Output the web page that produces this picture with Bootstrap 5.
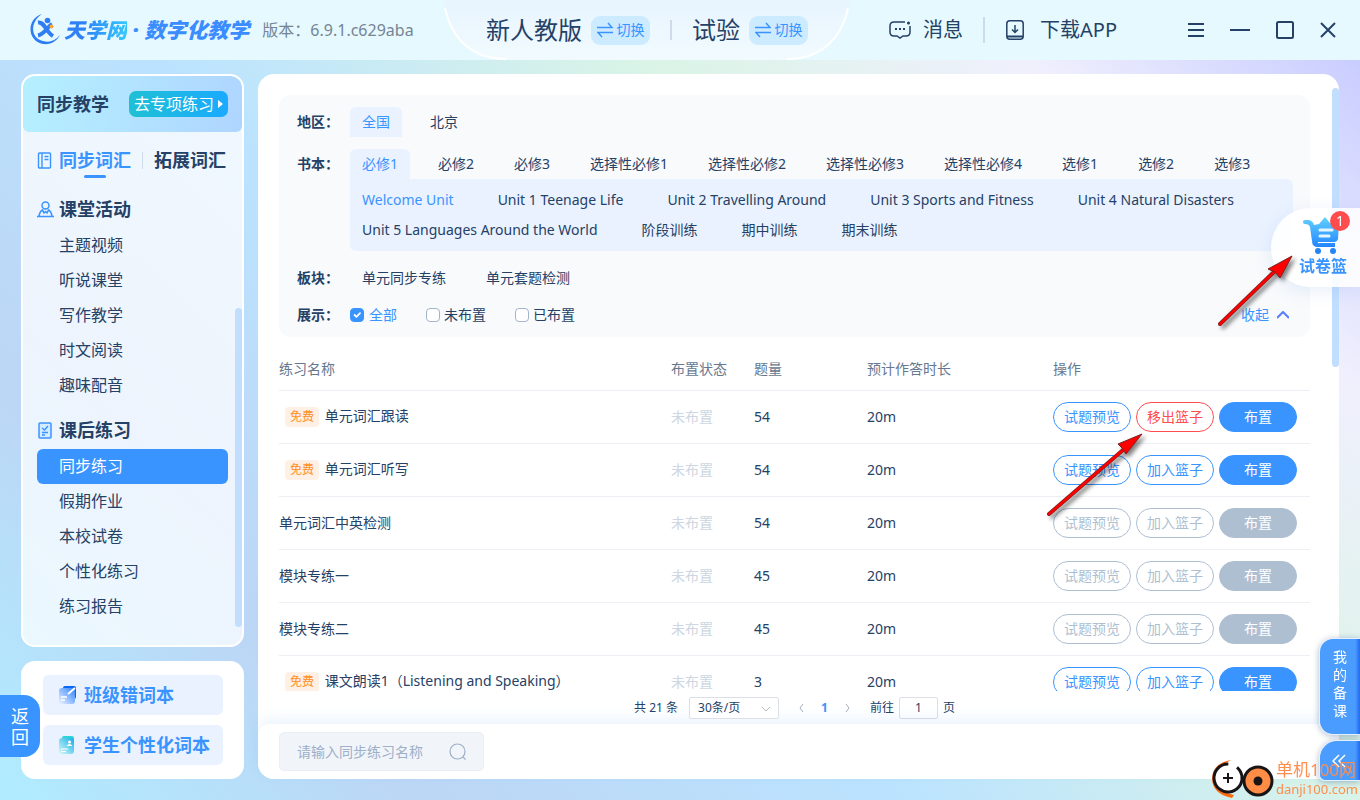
<!DOCTYPE html>
<html lang="zh-CN">
<head>
<meta charset="utf-8">
<meta name="viewport" content="width=device-width, initial-scale=1">
<title>天学网 · 数字化教学</title>
<link rel="stylesheet" href="https://cdn.jsdelivr.net/npm/bootstrap@5.3.0/dist/css/bootstrap.min.css">
<style>
:root{--ink:#254166;--blue:#3a94ff;--grey:#afbfd2}
body{font-family:"Noto Sans","Noto Sans CJK SC",sans-serif;font-size:14px;line-height:20px;color:var(--ink);height:100vh;overflow:hidden;background:#e5f9ff}
a{color:inherit;text-decoration:none}
button{color:inherit}
svg{flex:none;display:block}
/* top bar */
.topbar{height:60px;background:#e5f9ff}
.brand-side{width:444px;padding-left:30px}
.wordmark{font-size:21px;line-height:30px;font-weight:900;font-style:italic;color:#3b8cff;margin-left:2px}
.wordmark b{font-weight:900;background:linear-gradient(90deg,#2f80f5 30%,#35c8ff);-webkit-background-clip:text;background-clip:text;color:transparent}
.version{font-size:16px;color:#768493;margin-left:13px}
.edition{width:406px;font-size:24px;position:relative}
.edition>*{z-index:1}
.edition>svg{position:absolute;inset:0;z-index:0}
.swap{height:29px;width:59px;border:0;border-radius:9px;background:#cdebff;color:var(--blue);font-size:14px;padding:0;margin-left:9px}
.rule{width:2px;background:#cfdbeb}
.tool{font-size:20px}
.plain{border:0;background:none;padding:0}
.workspace{min-height:0;gap:14px;padding:14px 21px 21px;background:linear-gradient(45deg,#b0ecff 0%,#bcd6f5 20%,#bbe3ff 43%,#daf4e6 66%,#f0f0fd 84%,#c9cdff 100%)}
/* left column */
.side{width:223px}
.menu-panel{border:2px solid #fff;border-radius:14px;background:linear-gradient(45deg,#ebf8ff,#edf4fd 40%,#f0f8ff)}
.menu-head{height:56px;border-radius:10px 10px 6px 6px;background:linear-gradient(100deg,#b5f0ff,#afd5ff);padding:0 14px}
.ttl{font-size:18px;font-weight:700}
.go{width:99px;height:26px;border:0;border-radius:7px;background:linear-gradient(90deg,#1fc0d4,#1aaaff);color:#fff;font-size:16px;line-height:26px;padding:0;white-space:nowrap}
.tabs{height:58px;padding:0 14px 2px}
.tabs a.on{color:var(--blue);position:relative}
.tabs a.on::after{content:"";position:absolute;left:50%;margin-left:-11px;bottom:-8px;width:22px;height:3px;border-radius:2px;background:var(--blue)}
.group-head{height:38px;padding-left:14px}
.menu a{display:block;height:35px;line-height:35px;font-size:16px;margin:0 14px;padding-left:22px;border-radius:6px}
.menu a.on{background:var(--blue);color:#fff}
.thumb{position:absolute;width:7px;border-radius:4px;background:#c2deff}
.books{background:#fff;border-radius:14px;padding:14px 21px 14px 22px}
.books a{height:40px;border-radius:6px;background:#eaf2ff;color:var(--blue);padding-left:15px}
/* main */
.board{background:#fff;border-radius:16px}
.filters{background:#f8fafc;border-radius:12px;padding:12px 17px 8px 18px}
.flabel{width:53px;font-weight:700}
.opt{height:30px;line-height:30px;padding:0 12px;border-radius:6px 6px 0 0}
.opt.on{background:#eaf2ff;color:var(--blue)}
.units{margin-left:53px;background:#eaf2ff;border-radius:0 6px 6px 6px;padding:6px 12px;column-gap:44px}
.units a{line-height:30px}
.units a.on{color:var(--blue)}
.form-check-input.tick{width:14px;height:14px;margin:0;border:1px solid #a3b4cb;border-radius:4px;background-color:#fff}
.form-check-input.tick:checked{background-color:var(--blue);border-color:var(--blue)}
.board-table{table-layout:fixed;color:var(--ink)}
.board-table>:not(caption)>*>*{padding:0;height:53px;vertical-align:middle;border-bottom:1px solid #eceff4;background:none;color:inherit;box-shadow:none}
.board-table>thead>tr>th{height:41px;font-weight:400;color:#66788f}
.board-table .idle{color:#cdd6e2}
.free{display:inline-block;margin:0 2px 0 6px;width:34px;height:20px;line-height:20px;border-radius:4px;background:#fff0e5;color:#ff8f1f;font-size:12px;text-align:center}
.pill{width:78px;height:30px;padding:0;border:1px solid var(--blue);border-radius:15px;background:#fff;color:var(--blue);font-size:14px;line-height:28px}
.pill.full{background:var(--blue);color:#fff}
.pill.out{border-color:#ff4d4f;color:#ff4d4f}
.pill:disabled{border-color:var(--grey);color:var(--grey)}
.pill.full:disabled{background:var(--grey);color:#fff}
.pager{height:33px;font-size:12px;line-height:22px;padding-right:8px}
.pager select,.pager input{height:22px;border:1px solid #dcdfe6;border-radius:2px;background:#fff;color:inherit;font-size:12px;line-height:20px}
.pager select{appearance:none;width:90px;padding:0 8px}
.pager input{width:39px;text-align:center;padding:0}
.foot{height:55px;background:#fff;border-radius:12px 12px 16px 16px;box-shadow:0 -6px 14px rgba(58,148,255,.09);padding:8px 21px}
.search{width:205px;height:39px;background:#f1f5f9;border:1px solid #eaeef5;border-radius:5px;padding:0 17px}
.search input{width:152px;border:0;background:none;outline:0;padding:0;color:inherit}
.search input::placeholder{color:#9dafc9;opacity:1}
/* floating pieces */
.back{position:fixed;left:0;bottom:43px;width:40px;height:62px;border:0;border-radius:0 16px 16px 0;background:var(--blue);color:#fff;font-size:18px;line-height:21px;padding:2px 10px 0}
.basket{position:fixed;right:0;top:208px;width:89px;height:79px;border-radius:40px 0 0 40px;background:rgba(255,255,255,.88);box-shadow:0 4px 18px rgba(90,140,220,.14);color:var(--blue);font-size:16px;font-weight:700;padding:8px 13px 0 28px;white-space:nowrap}
.basket i{position:absolute;left:59px;top:3px;width:20px;height:20px;border-radius:50%;background:#ff4d4f;color:#fff;font:400 14px/20px "Noto Sans",sans-serif;text-align:center}
.dock{position:fixed;right:0;width:41px;border:1px solid #e4efff;border-right:0;background:linear-gradient(90deg,#4a9cff 88%,#2468f0);color:#fff;font-size:14px;line-height:18px;box-shadow:0 1px 6px rgba(30,60,110,.35)}
.dock.prep{bottom:65px;height:97px;border-radius:14px 0 0 14px;padding:0 13px 6px}
.dock.fold{bottom:19px;height:41px;border-radius:18px 0 0 6px;padding:0 0 0 12px}
.arrow{position:fixed;filter:drop-shadow(3px 3px 2px rgba(0,0,0,.5));pointer-events:none}
.credit{position:fixed;right:2px;bottom:0;color:#ff8d4d;font-size:17px;line-height:20px;gap:2px}
.credit small{font:13px/18px "Noto Sans",sans-serif}
</style>
</head>
<body class="d-flex flex-column">
<header class="topbar d-flex flex-shrink-0">
  <div class="brand-side d-flex align-items-center flex-shrink-0">
    <svg width="32" height="34" viewBox="0 0 32 34" fill="none"><path d="M12 1C-4 6-3 28 13 31c8 1 14-3 17-9-5 6-11 8-17 6C0 25 0 9 12 1Z" fill="#2f7df3"/><path d="M8 9.500c7-1 7 9 15 13.500M22 11C18 13 15 21 8 22.500" stroke="#2f7df3" stroke-width="4"/><circle cx="17.500" cy="7.500" r="2.800" fill="#2f7df3"/><circle cx="21.500" cy="13.500" r="2" fill="#ffa531"/></svg>
    <span class="wordmark"><b>天学网</b> · 数字化教学</span>
    <span class="version">版本：6.9.1.c629aba</span>
  </div>
  <div class="edition d-flex align-items-center justify-content-center flex-shrink-0">
    <svg width="406" height="60" viewBox="0 0 406 60" fill="none"><defs><linearGradient id="ed" x2="0" y2="1"><stop stop-color="#e8f4fe"/><stop offset="1" stop-color="#f1fbff"/></linearGradient></defs><path d="M0 0C4 35 25 60 62 60H343C380 60 401 35 406 0Z" fill="url(#ed)"/><path d="M1 8C8 40 29 59 62 59M343 59C376 59 397 40 404 8" stroke="#fff" stroke-width="2"/></svg>
    <span>新人教版</span>
    <button class="swap d-flex align-items-center justify-content-center gap-1"><svg width="16" height="16" viewBox="0 0 16 16" fill="none" stroke="#3a94ff" stroke-width="1.500"><path d="M0 5.500H15L11 1M16 10.500H1L5 15"/></svg>切换</button>
    <span class="rule" style="height:20px;margin:0 20px"></span>
    <span>试验</span>
    <button class="swap d-flex align-items-center justify-content-center gap-1"><svg width="16" height="16" viewBox="0 0 16 16" fill="none" stroke="#3a94ff" stroke-width="1.500"><path d="M0 5.500H15L11 1M16 10.500H1L5 15"/></svg>切换</button>
  </div>
  <div class="d-flex align-items-center flex-grow-1 justify-content-end pe-4">
    <a href="#" class="tool d-flex align-items-center gap-2"><svg class="me-1" width="22" height="20" viewBox="0 0 22 20" fill="none" stroke="#254166" stroke-width="1.500"><path d="M16 2H5Q1 2 1 6V12Q1 16 5 16H8L11 18L14 16H17Q21 16 21 12V6"/><path d="M6 9h2M10 9h2M14 9h2" stroke-width="2"/><circle cx="19.500" cy="3" r=".8"/></svg>消息</a>
    <span class="rule" style="height:26px;margin:0 21px 0 20px"></span>
    <a href="#" class="tool d-flex align-items-center gap-3"><svg width="18" height="20" viewBox="0 0 18 20" fill="none" stroke="#254166" stroke-width="1.500"><rect x=".8" y=".8" width="16.400" height="18.400" rx="3"/><path d="M1 16.500H17" stroke-width="2"/><path d="M9 5v7M6 9.500 9 12.500 12 9.500"/></svg>下载APP</a>
    <div class="d-flex align-items-center" style="gap:26px;margin-left:71px">
      <button class="plain" aria-label="菜单"><svg width="16" height="16" viewBox="0 0 16 16" stroke="#254166" stroke-width="2"><path d="M0 2H16M0 8H16M0 14H16"/></svg></button>
      <button class="plain" aria-label="最小化"><svg width="20" height="16" viewBox="0 0 20 16" stroke="#254166" stroke-width="2"><path d="M0 8H20"/></svg></button>
      <button class="plain" aria-label="最大化"><svg width="18" height="18" viewBox="0 0 18 18" fill="none" stroke="#254166" stroke-width="2"><rect x="1" y="1" width="16" height="16" rx="1.500"/></svg></button>
      <button class="plain" aria-label="关闭"><svg width="16" height="16" viewBox="0 0 16 16" stroke="#254166" stroke-width="2"><path d="M1 1 15 15M15 1 1 15"/></svg></button>
    </div>
  </div>
</header>

<div class="workspace d-flex flex-grow-1">
  <aside class="side d-flex flex-column flex-shrink-0" style="gap:14px">
    <nav class="menu-panel flex-grow-1 position-relative overflow-hidden" style="min-height:0">
      <div class="menu-head d-flex align-items-center justify-content-between">
        <span class="ttl">同步教学</span>
        <button class="go d-flex align-items-center justify-content-center gap-1">去专项练习<svg width="5" height="8" viewBox="0 0 5 8"><path d="M0 0 5 4 0 8Z" fill="#fff"/></svg></button>
      </div>
      <div class="tabs d-flex align-items-center ttl">
        <svg width="15" height="17" viewBox="0 0 15 17" fill="none" stroke="#3a94ff" stroke-width="1.400"><rect x="1.500" y="1" width="12" height="15" rx="1"/><path d="M5 1V16M7.500 4.500H11.500M7.500 7.500H11.500"/></svg>
        <a href="#" class="on" style="margin-left:7px">同步词汇</a>
        <span class="rule" style="width:1px;height:17px;margin:0 11px"></span>
        <a href="#">拓展词汇</a>
      </div>
      <div class="group-head d-flex align-items-center ttl"><svg width="17" height="17" viewBox="0 0 17 17" fill="none" stroke="#3a94ff" stroke-width="1.500"><circle cx="8.500" cy="4.500" r="3.500"/><path d="M0 15.500H17M2 15Q3 10 5.500 9L7 12 8.500 10.500 10 12 11.500 9Q14 10 15 15"/></svg><span style="margin-left:5px">课堂活动</span></div>
      <div class="menu"><a href="#">主题视频</a><a href="#">听说课堂</a><a href="#">写作教学</a><a href="#">时文阅读</a><a href="#">趣味配音</a></div>
      <div class="group-head mt-2 d-flex align-items-center ttl"><svg width="15" height="17" viewBox="0 0 15 17" fill="none" stroke="#3a94ff" stroke-width="1.500"><rect x="2" y="1" width="12" height="15" rx="1" fill="#d5ebff"/><path d="M5 6 7.500 8 11 4M5 10.500H11M5 13H8"/></svg><span style="margin-left:7px">课后练习</span></div>
      <div class="menu"><a href="#" class="on">同步练习</a><a href="#">假期作业</a><a href="#">本校试卷</a><a href="#">个性化练习</a><a href="#">练习报告</a></div>
      <span class="thumb" style="right:0;top:232px;height:319px"></span>
    </nav>
    <div class="books d-flex flex-column flex-shrink-0 ttl" style="gap:10px">
      <a href="#" class="d-flex align-items-center"><svg width="19" height="20" viewBox="0 0 19 20"><defs><linearGradient id="b1" x1="1" x2="0" y2="1"><stop stop-color="#2c82ff"/><stop offset=".9" stop-color="#dce8ff"/></linearGradient></defs><rect x="5" y="1" width="13" height="13" rx="2" fill="#0b66f5"/><rect x="1" y="3" width="16" height="16" rx="3" fill="url(#b1)"/><path d="M10 9 17 3" stroke="#fff" stroke-width="2"/><path d="M3 12H9M3 15H7" stroke="#fff" stroke-width="1.500"/></svg><span style="margin-left:7px">班级错词本</span></a>
      <a href="#" class="d-flex align-items-center"><svg width="19" height="20" viewBox="0 0 19 20"><defs><linearGradient id="b2" x1="1" x2="0" y2="1"><stop stop-color="#16aee8"/><stop offset=".9" stop-color="#c5f3f7"/></linearGradient></defs><rect x="4" y="1" width="12" height="15" rx="2" fill="#2bd5d3"/><rect x="1" y="3" width="15" height="16" rx="3" fill="url(#b2)"/><circle cx="11.500" cy="7" r="1.500" fill="#fff"/><path d="M8.500 11Q11.500 7 14.500 11Z" fill="#fff"/><path d="M3 14H10M3 16.500H8" stroke="#fff" stroke-width="1.200"/></svg><span style="margin-left:7px">学生个性化词本</span></a>
    </div>
  </aside>

  <main class="board flex-grow-1 d-flex flex-column position-relative" style="min-width:0">
    <div class="flex-grow-1 d-flex flex-column overflow-hidden" style="min-height:0;padding:21px 29px 0 21px">
      <section class="filters flex-shrink-0">
        <div class="d-flex align-items-center"><span class="flabel">地区：</span><div class="d-flex gap-3"><a href="#" class="opt on">全国</a><a href="#" class="opt">北京</a></div></div>
        <div class="d-flex align-items-center" style="margin-top:12px"><span class="flabel">书本：</span><div class="d-flex gap-3"><a href="#" class="opt on">必修1</a><a href="#" class="opt">必修2</a><a href="#" class="opt">必修3</a><a href="#" class="opt">选择性必修1</a><a href="#" class="opt">选择性必修2</a><a href="#" class="opt">选择性必修3</a><a href="#" class="opt">选择性必修4</a><a href="#" class="opt">选修1</a><a href="#" class="opt">选修2</a><a href="#" class="opt">选修3</a></div></div>
        <div class="units d-flex flex-wrap"><a href="#" class="on">Welcome Unit</a><a href="#">Unit 1 Teenage Life</a><a href="#">Unit 2 Travelling Around</a><a href="#">Unit 3 Sports and Fitness</a><a href="#">Unit 4 Natural Disasters</a><a href="#">Unit 5 Languages Around the World</a><a href="#">阶段训练</a><a href="#">期中训练</a><a href="#">期末训练</a></div>
        <div class="d-flex align-items-center" style="margin-top:12px"><span class="flabel">板块：</span><div class="d-flex gap-3"><a href="#" class="opt">单元同步专练</a><a href="#" class="opt">单元套题检测</a></div></div>
        <div class="d-flex align-items-center mt-2" style="height:28px"><span class="flabel">展示：</span>
          <div class="d-flex flex-grow-1" style="gap:29px">
            <label class="d-flex align-items-center" style="gap:5px;color:var(--blue)"><input type="checkbox" class="form-check-input tick" checked>全部</label>
            <label class="d-flex align-items-center gap-1"><input type="checkbox" class="form-check-input tick">未布置</label>
            <label class="d-flex align-items-center gap-1"><input type="checkbox" class="form-check-input tick">已布置</label>
          </div>
          <button class="plain d-flex align-items-center gap-2" style="color:var(--blue)">收起<svg class="me-1" width="12" height="8" viewBox="0 0 12 8" fill="none" stroke="#5a7cff" stroke-width="2"><path d="M0 7 6 1 12 7"/></svg></button>
        </div>
      </section>
      <div class="flex-grow-1 overflow-hidden" style="min-height:0;padding-top:12px">
        <table class="table board-table mb-0">
          <colgroup><col><col style="width:83px"><col style="width:113px"><col style="width:186px"><col style="width:257px"></colgroup>
          <thead><tr><th>练习名称</th><th>布置状态</th><th>题量</th><th>预计作答时长</th><th>操作</th></tr></thead>
          <tbody>
            <tr><td><span class="free">免费</span> 单元词汇跟读</td><td class="idle">未布置</td><td>54</td><td>20m</td><td><div class="d-flex" style="gap:5px"><button class="pill">试题预览</button><button class="pill out">移出篮子</button><button class="pill full">布置</button></div></td></tr>
            <tr><td><span class="free">免费</span> 单元词汇听写</td><td class="idle">未布置</td><td>54</td><td>20m</td><td><div class="d-flex" style="gap:5px"><button class="pill">试题预览</button><button class="pill">加入篮子</button><button class="pill full">布置</button></div></td></tr>
            <tr><td>单元词汇中英检测</td><td class="idle">未布置</td><td>54</td><td>20m</td><td><div class="d-flex" style="gap:5px"><button class="pill" disabled>试题预览</button><button class="pill" disabled>加入篮子</button><button class="pill full" disabled>布置</button></div></td></tr>
            <tr><td>模块专练一</td><td class="idle">未布置</td><td>45</td><td>20m</td><td><div class="d-flex" style="gap:5px"><button class="pill" disabled>试题预览</button><button class="pill" disabled>加入篮子</button><button class="pill full" disabled>布置</button></div></td></tr>
            <tr><td>模块专练二</td><td class="idle">未布置</td><td>45</td><td>20m</td><td><div class="d-flex" style="gap:5px"><button class="pill" disabled>试题预览</button><button class="pill" disabled>加入篮子</button><button class="pill full" disabled>布置</button></div></td></tr>
            <tr><td><span class="free">免费</span> 课文朗读1（Listening and Speaking）</td><td class="idle">未布置</td><td>3</td><td>20m</td><td><div class="d-flex" style="gap:5px"><button class="pill">试题预览</button><button class="pill">加入篮子</button><button class="pill full">布置</button></div></td></tr>
          </tbody>
        </table>
      </div>
    </div>
    <div class="pager d-flex justify-content-center align-items-center flex-shrink-0">
      <span style="margin-right:11px">共 21 条</span>
      <label class="position-relative"><select aria-label="每页条数"><option>30条/页</option></select><svg class="position-absolute" style="right:9px;top:9px" width="8" height="6" viewBox="0 0 8 6" fill="none" stroke="#b5bcc8"><path d="M0 1 4 5 8 1"/></svg></label>
      <button class="plain" aria-label="上一页" style="margin-left:20px"><svg width="5" height="8" viewBox="0 0 5 8" fill="none" stroke="#a5aebb"><path d="M4 0 1 4 4 8"/></svg></button>
      <a href="#" class="fw-bold" style="color:var(--blue);margin:0 17px">1</a>
      <button class="plain" aria-label="下一页"><svg width="5" height="8" viewBox="0 0 5 8" fill="none" stroke="#a5aebb"><path d="M1 0 4 4 1 8"/></svg></button>
      <label class="d-flex align-items-center" style="margin-left:20px;gap:5px">前往<input type="text" value="1">页</label>
    </div>
    <div class="foot flex-shrink-0">
      <div class="search d-flex align-items-center"><input type="text" placeholder="请输入同步练习名称" aria-label="搜索"><svg width="18" height="18" viewBox="0 0 18 18" fill="none" stroke="#9dafc9" stroke-width="1.200"><circle cx="8.500" cy="8.500" r="7.500"/><path d="M14 14 16.500 16.500"/></svg></div>
    </div>
    <span class="thumb" style="right:0;top:14px;height:279px"></span>
  </main>
</div>

<button class="back">返回</button>
<a href="#" class="basket"><svg style="margin-left:4px" width="38" height="40" viewBox="0 0 38 40"><defs><linearGradient id="ct" x2="0" y2="1"><stop stop-color="#62d2ff"/><stop offset="1" stop-color="#2385ff"/></linearGradient></defs><path d="M0 6Q0 4 2 4H6Q10 5 11 9L16 8 22 1 27 7 36 8 35 23Q34 26 31 26H15Q14 28 17 27H32V31H15Q9 31 9 25L7 11Q6 8 2 8Q0 8 0 6Z" fill="url(#ct)"/><circle cx="15" cy="35" r="3" fill="#2484f5"/><circle cx="30" cy="35" r="3" fill="#2484f5"/><path d="M17 14H29M17 20H26" stroke="#e5f5ff" stroke-width="3" stroke-linecap="round"/></svg><span class="d-block">试卷篮</span><i>1</i></a>
<button class="dock prep">我的备课</button>
<button class="dock fold" aria-label="展开"><svg width="14" height="14" viewBox="0 0 14 14" fill="none" stroke="#fff" stroke-width="1.500"><path d="M7 1 1 7 7 13M13 1 7 7 13 13"/></svg></button>
<svg class="arrow" style="right:66px;top:254px" width="76" height="74" viewBox="0 0 76 74"><path d="M2 70 57 17" stroke="#7a2222" stroke-width="4" stroke-linecap="round"/><path d="M2 70 57 17" stroke="red" stroke-width="2.500" stroke-linecap="round"/><path d="M74 2 62 24 57 18 50 15Z" fill="red" stroke="#7a2222"/></svg>
<svg class="arrow" style="right:216px;top:432px" width="97" height="86" viewBox="0 0 97 86"><path d="M2 82 76 18" stroke="#7a2222" stroke-width="4" stroke-linecap="round"/><path d="M2 82 76 18" stroke="red" stroke-width="2.500" stroke-linecap="round"/><path d="M95 2 79 22 75 16 71 12Z" fill="red" stroke="#7a2222"/></svg>
<div class="credit d-flex align-items-center"><svg width="64" height="42" viewBox="0 0 64 42" fill="none"><path d="M21 2Q3 5 2 20Q2 36 22 40L24 37Q8 34 7 21Q8 8 21 2Z" fill="#ff6a0d"/><circle cx="18" cy="20" r="14" fill="#fff" stroke="#191516" stroke-width="3" stroke-dasharray="78 10" transform="rotate(-50 18 20)"/><path d="M18 15V25M13 20H23" stroke="#191516" stroke-width="2"/><circle cx="48" cy="23" r="14" fill="#ff8d45" stroke="#191516" stroke-width="3"/><circle cx="48" cy="23" r="4.500" fill="#191516"/></svg><div class="d-flex flex-column"><span>单机100网</span><small>danji100.com</small></div></div>
<script src="https://cdn.jsdelivr.net/npm/bootstrap@5.3.0/dist/js/bootstrap.bundle.min.js"></script>
</body>
</html>
